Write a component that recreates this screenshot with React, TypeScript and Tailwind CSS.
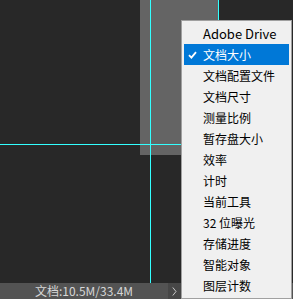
import React from 'react';

const items = [
  'Adobe Drive',
  '文档大小',
  '文档配置文件',
  '文档尺寸',
  '测量比例',
  '暂存盘大小',
  '效率',
  '计时',
  '当前工具',
  '32 位曝光',
  '存储进度',
  '智能对象',
  '图层计数',
];

const font = { fontFamily: '"Noto Sans CJK SC", "Noto Sans", sans-serif' };

const Check = () => (
  <svg width="9" height="8" viewBox="0 0 9 8" className="absolute left-[4px] top-[7px]">
    <path d="M1 4.2 L3.4 6.6 L8 1.2" fill="none" stroke="white" strokeWidth="1.8" />
  </svg>
);

const App: React.FC = () => {
  return (
    <div className="relative w-[293px] h-[299px] bg-[#282828] overflow-hidden flex flex-col select-none" style={font}>
      {/* canvas */}
      <div className="relative flex-1">
        <div className="absolute left-[140px] top-0 w-[78px] h-[155px] bg-[#646464]" />
        <div className="absolute left-[150px] top-0 w-px h-full bg-[#33ffff]" />
        <div className="absolute left-[218px] top-0 w-px h-[20px] bg-[#33ffff]" />
        <div className="absolute left-0 top-[144px] w-[181px] h-px bg-[#33ffff]" />
      </div>

      {/* status bar */}
      <div className="h-[16px] flex bg-[#535353]">
        <div className="w-[168px] flex items-center justify-center text-[12px] leading-none text-[#d6d6d6]">
          文档:10.5M/33.4M
        </div>
        <div className="w-[13px] flex items-center justify-center bg-[#474747]">
          <svg width="5" height="9" viewBox="0 0 5 9">
            <path d="M0.8 0.5 L4 4.5 L0.8 8.5" fill="none" stroke="#c8c8c8" strokeWidth="1" />
          </svg>
        </div>
        <div className="flex-1" />
      </div>

      {/* popup menu */}
      <div className="absolute left-[181px] top-[20px] w-[111px] h-[279px] bg-[#f0f0f0] border border-[#a0a0a0] p-[2px] flex flex-col">
        {items.map((t, i) => (
          <div
            key={t}
            className={`relative h-[21px] shrink-0 flex items-center pl-[19px] leading-none ${
              i === 0 ? 'text-[13px]' : 'text-[12px]'
            } ${i === 1 ? 'bg-[#0078d7] text-white' : 'text-black'}`}
          >
            {i === 1 && <Check />}
            {t}
          </div>
        ))}
      </div>
    </div>
  );
};

export default App;
